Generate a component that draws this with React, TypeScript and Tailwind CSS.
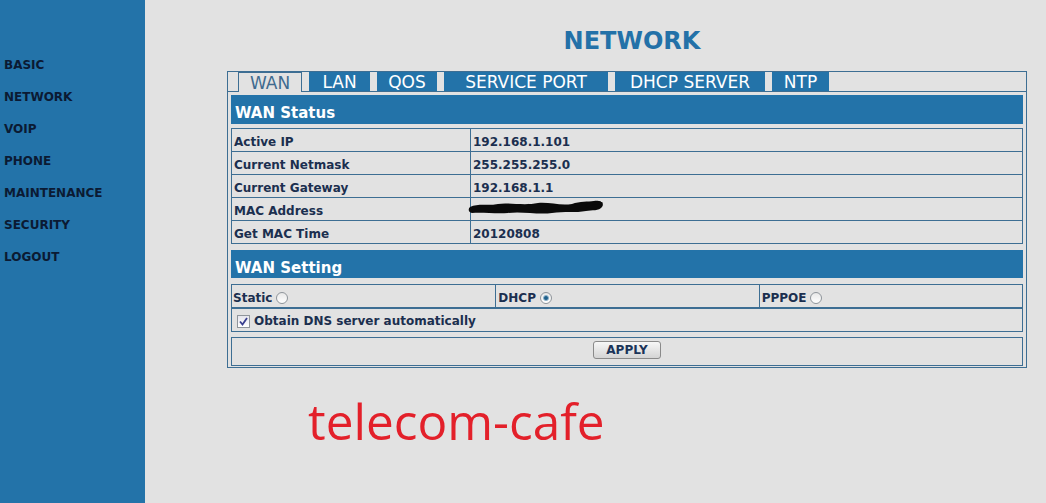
import React from "react";

const V = { fontFamily: '"DejaVu Sans", Verdana, sans-serif' };

function Radio({ checked }: { checked?: boolean }) {
  return (
    <span className="inline-flex items-center justify-center w-[12px] h-[12px] rounded-full border border-[#8f959b] bg-gradient-to-b from-[#e8e8e8] to-[#ffffff] ml-[4px] align-middle">
      {checked && <span className="w-[6px] h-[6px] rounded-full bg-[#1f5f8a] border border-[#8fb4cc]" />}
    </span>
  );
}

function Checkbox() {
  return (
    <span className="inline-flex items-center justify-center w-[13px] h-[13px] border border-[#8f959b] bg-gradient-to-b from-[#e6e6ee] to-[#ffffff] align-middle">
      <svg width="11" height="11" viewBox="0 0 11 11">
        <path d="M2 5.5 L4.5 8.5 L9 2" fill="none" stroke="#3a3f8f" strokeWidth="1.8" />
      </svg>
    </span>
  );
}

const statusRows: [string, string][] = [
  ["Active IP", "192.168.1.101"],
  ["Current Netmask", "255.255.255.0"],
  ["Current Gateway", "192.168.1.1"],
  ["MAC Address", ""],
  ["Get MAC Time", "20120808"],
];

export default function App() {
  const nav = ["BASIC", "NETWORK", "VOIP", "PHONE", "MAINTENANCE", "SECURITY", "LOGOUT"];
  const tabs: [string, string][] = [
    ["WAN", "w-[64px]"],
    ["LAN", "w-[61px]"],
    ["QOS", "w-[60px]"],
    ["SERVICE PORT", "w-[164px]"],
    ["DHCP SERVER", "w-[150px]"],
    ["NTP", "w-[57px]"],
  ];
  return (
    <div className="flex w-[1046px] h-[503px] overflow-hidden bg-[#e2e2e2]" style={V}>
      <aside className="w-[145px] shrink-0 bg-[#2373a9] pt-[49px] pl-[4px]">
        {nav.map((n) => (
          <div key={n} className="h-[32px] leading-[32px] text-[12px] font-bold text-[#0b1a33]">
            {n}
          </div>
        ))}
      </aside>
      <main className="flex-1 bg-[#e2e2e2]">
        <div className="ml-[82px] w-[800px]">
          <h1 className="pt-[25px] pl-[10px] text-center text-[24px] leading-[32px] font-bold text-[#2371a8]">
            NETWORK
          </h1>
          <div className="mt-[14px] border border-[#3d6e93]">
            <div className="flex h-[20px] border-b border-[#3d6e93] pl-[10px] gap-[7px]">
              {tabs.map(([t, w], i) =>
                i === 0 ? (
                  <div
                    key={t}
                    className={`${w} h-[20px] -mb-px bg-[#e2e2e2] border-x border-t border-[#3d6e93] text-[17px] leading-[20px] text-center text-[#3f6b8f]`}
                  >
                    {t}
                  </div>
                ) : (
                  <div key={t} className={`${w} h-[19px] bg-[#2373a9] text-[17px] leading-[20px] text-center text-white`}>
                    {t}
                  </div>
                )
              )}
            </div>
            <div className="px-[3px] pt-[3px] pb-[1px]">
              <div className="h-[29px] bg-[#2373a9] pl-[4px] pt-[7px] text-[15px] leading-[23px] font-bold text-white">
                WAN Status
              </div>
              <div className="mt-[4px] border-t border-x border-[#3d6e93]">
                {statusRows.map(([k, v]) => (
                  <div key={k} className="flex h-[23px] border-b border-[#3d6e93] text-[12px] font-bold text-[#1b2f4f] pt-[3px] leading-[20px]">
                    <div className="w-[239px] pl-[2px] border-r border-[#3d6e93] -mt-[3px] pt-[3px]">{k}</div>
                    <div className="flex-1 pl-[2px] relative">
                      {k === "MAC Address" ? (
                        <svg className="absolute left-[-3px] top-[-2px]" width="140" height="20" viewBox="0 0 140 20">
                          <path
                            d="M2 8 C10 4 20 7 30 5 C40 3 55 7 70 4 C82 3 92 7 104 5 C112 2 120 3 126 2 C132 1 137 4 134 8 C131 12 124 11 118 12 C108 14 96 12 84 14 C70 16 54 12 40 14 C28 15 14 13 4 14 C0 13 0 10 2 8 Z"
                            fill="#0a0a0a"
                          />
                          <path d="M118 8 C122 4 130 2 134 5" stroke="#0a0a0a" strokeWidth="3" fill="none" />
                        </svg>
                      ) : (
                        v
                      )}
                    </div>
                  </div>
                ))}
              </div>
              <div className="mt-[6px] h-[28px] bg-[#2373a9] pl-[4px] pt-[7px] text-[15px] leading-[22px] font-bold text-white">
                WAN Setting
              </div>
              <div className="mt-[6px] grid grid-cols-3 h-[24px] border border-[#3d6e93] text-[12px] font-bold text-[#1b2f4f] leading-[22px]">
                <div className="pl-[1px] pt-[2px] flex items-center">
                  Static <Radio />
                </div>
                <div className="pl-[2px] pt-[2px] flex items-center border-l border-[#3d6e93]">
                  DHCP <Radio checked />
                </div>
                <div className="pl-[2px] pt-[2px] flex items-center border-l border-[#3d6e93]">
                  PPPOE <Radio />
                </div>
              </div>
              <div className="h-[24px] border border-[#3d6e93] flex items-center pt-[2px] pl-[5px] gap-[4px] text-[12px] font-bold text-[#1b2f4f]">
                <Checkbox />
                <span>Obtain DNS server automatically</span>
              </div>
              <div className="mt-[5px] h-[29px] border border-[#3d6e93] flex justify-center items-start pt-[3px]">
                <button className="w-[68px] h-[18px] rounded-[3px] border border-[#8a8a8a] bg-gradient-to-b from-[#f7f7f7] to-[#d4d4d4] text-[12px] leading-[17px] font-bold text-[#1b3459]">
                  APPLY
                </button>
              </div>
            </div>
          </div>
        </div>
        <div
          className="mt-[25px] pl-[163px] text-[49.5px] leading-[56px] text-[#e3202a]"
          style={{ fontFamily: '"Open Sans", "Noto Sans", sans-serif' }}
        >
          telecom-cafe
        </div>
      </main>
    </div>
  );
}
